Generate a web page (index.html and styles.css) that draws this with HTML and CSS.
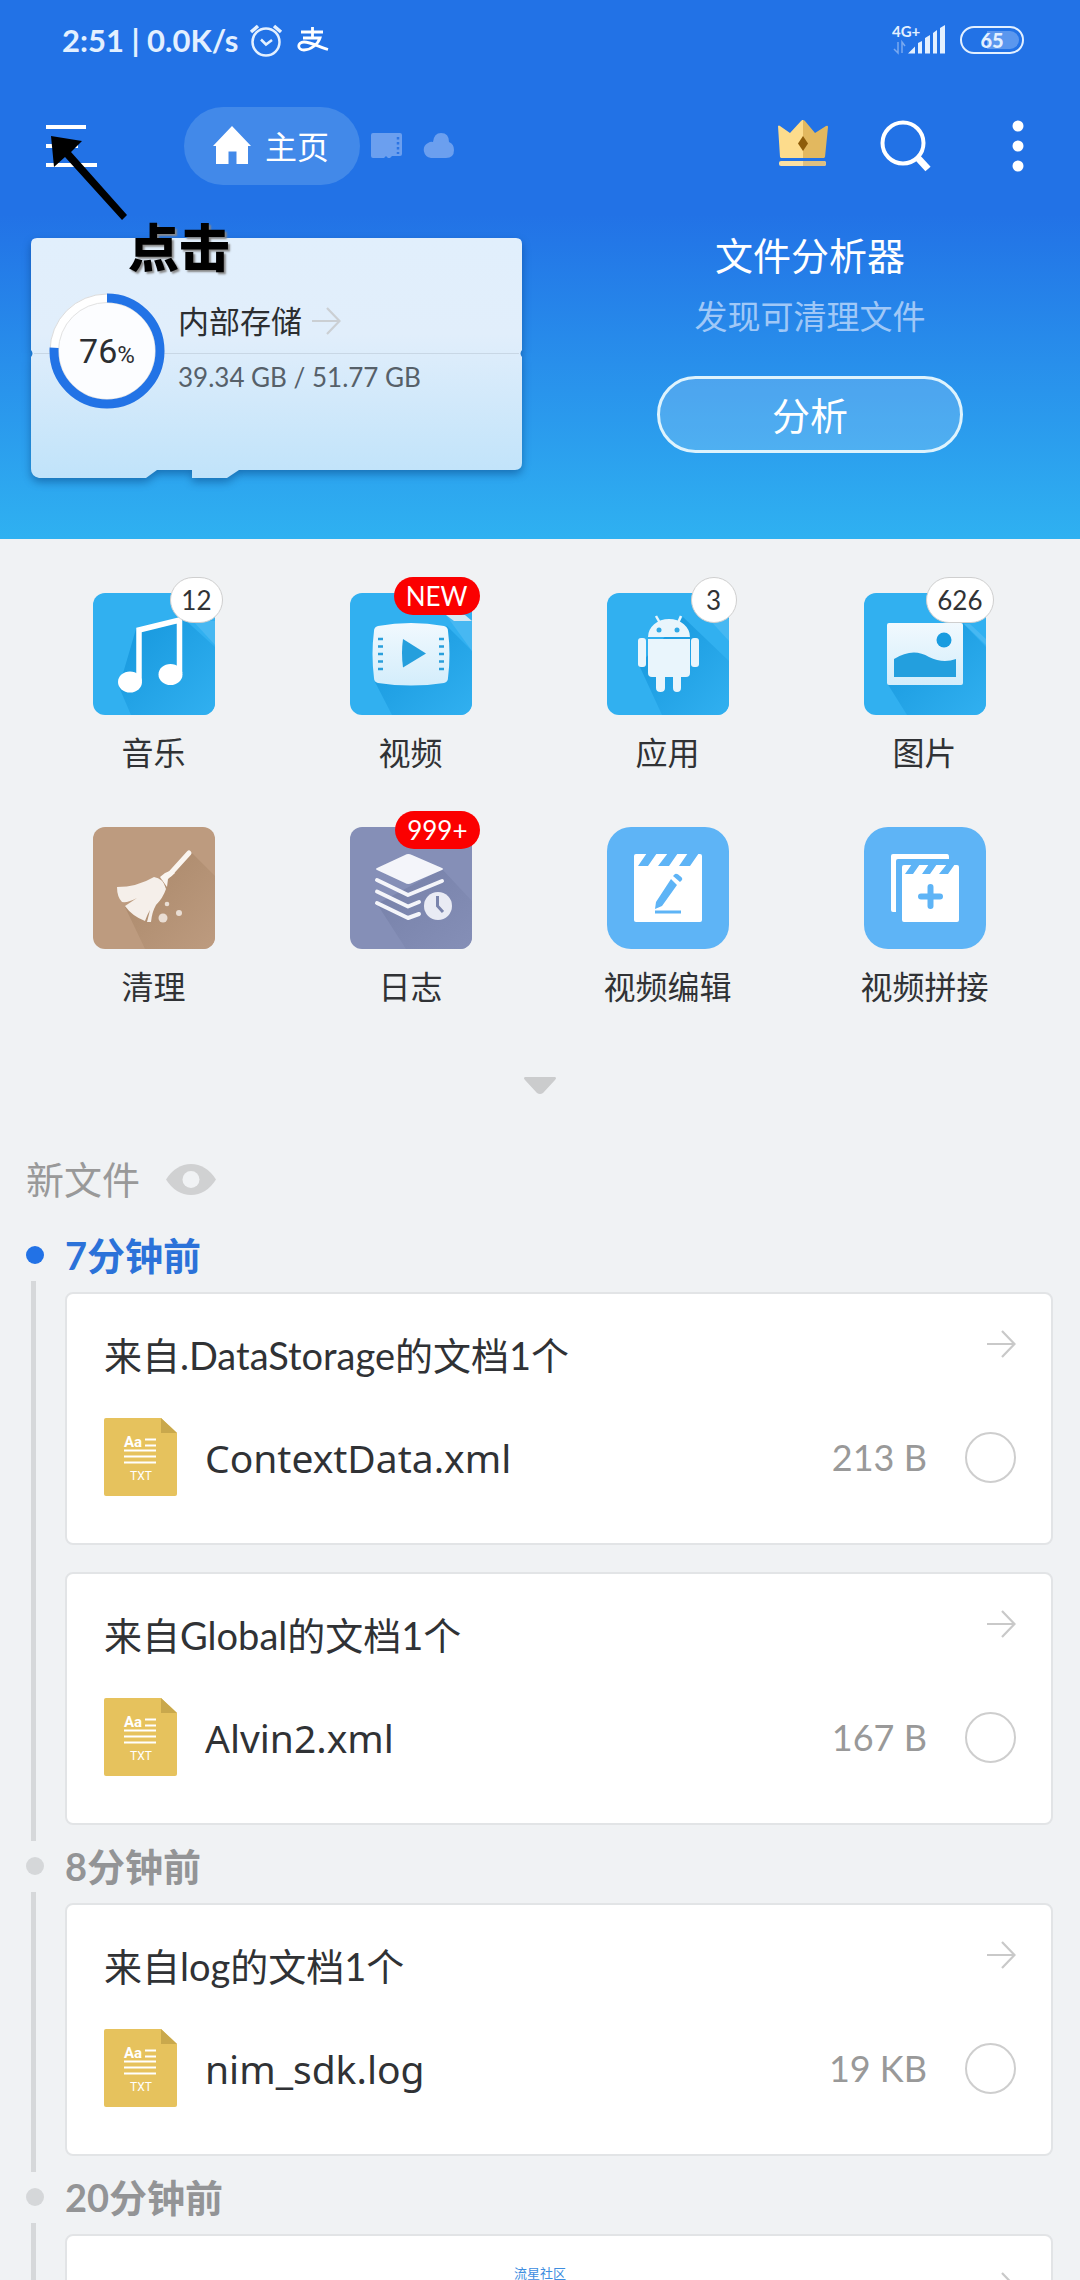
FILE: index.html
```html
<!DOCTYPE html>
<html lang="zh-CN">
<head>
<meta charset="utf-8">
<meta name="viewport" content="width=device-width, initial-scale=1">
<title>主页</title>
<link rel="stylesheet" href="styles.css">
</head>
<body>
<svg class="defs" aria-hidden="true">
  <defs>
    <linearGradient id="card-fill" x1="0" y1="0" x2="0" y2="1"><stop offset="0" stop-color="#e1effc"/><stop offset=".4" stop-color="#e1eefb"/><stop offset="1" stop-color="#c0e3fa"/></linearGradient>
    <linearGradient id="shade-blue" x1="0" y1="0" x2="1" y2="1"><stop offset="0" stop-color="#1596dc"/><stop offset="1" stop-color="#31b0f0"/></linearGradient>
    <linearGradient id="shade-brown" x1="0" y1="0" x2="1" y2="1"><stop offset="0" stop-color="#a98769"/><stop offset="1" stop-color="#bd9b7f"/></linearGradient>
    <linearGradient id="shade-violet" x1="0" y1="0" x2="1" y2="1"><stop offset="0" stop-color="#7680a8"/><stop offset="1" stop-color="#858fb7"/></linearGradient>
    <linearGradient id="ice" x1="0" y1="0" x2="0" y2="1"><stop offset="0" stop-color="#f1f9fe"/><stop offset="1" stop-color="#d3edfb"/></linearGradient>
    <symbol id="arrow" viewBox="0 0 30 28"><path d="M1 14H28M16 1L28.500 14L16 27" fill="none" stroke="currentColor" stroke-width="2.200"/></symbol>
    <symbol id="doc" viewBox="0 0 73 78">
      <path d="M2 0H57L73 15V76Q73 78 71 78H2Q0 78 0 76V2Q0 0 2 0Z" fill="#e6c25d"/><path d="M57 0L73 15H57Z" fill="#c9a84c"/>
      <path d="M41 21.500H52M41 27.500H52M20 32.500H52M20 38.500H52M20 44.500H52" stroke="#fff" stroke-width="2"/>
      <text x="20" y="29" font-size="15" font-weight="700" fill="#fff">Aa</text><text x="26" y="62" font-size="12" fill="#fff">TXT</text>
    </symbol>
  </defs>
</svg>

<div class="app">
  <header class="top">
    <div class="status">
      <span class="clock">2:51 | 0.0K/s</span>
      <svg class="alarm" viewBox="0 0 34 34" fill="none" stroke="#e3f0ff" stroke-width="2.500"><circle cx="17" cy="19" r="13.500"/><path d="M2 9L9 3M32 9L25 3" stroke-width="3.500"/><path d="M12 16.500L17 21.500L23 17"/></svg>
      <svg class="pay" viewBox="0 0 32 26" fill="none" stroke="#fff" stroke-width="2.800"><path d="M4 5H26M15.500 0V11M6 11H23C21 17 14 23 7 23C0 23 0 15 7 15C14 15 22 20 31 22.500" /></svg>
      <div class="signal">
        <svg viewBox="0 0 56 34"><text x="0" y="14" font-size="15" font-weight="700" fill="#e3f0ff">4G+</text><path d="M2 26L6 30V19M10 30V19L13 23" fill="none" stroke="#79a9f0" stroke-width="1.500"/><path fill="#e3f0ff" d="M16 30.500L23 23.500V30.500ZM26 20L30 18V30.500H26ZM33 15L38 12V30.500H33ZM41 10L45 7V30.500H41ZM48 5L53 2V30.500H48Z"/></svg>
        <span class="battery">65</span>
      </div>
    </div>

    <nav class="toolbar">
      <button class="menu" aria-label="菜单"><svg viewBox="0 0 51 44"><path d="M0 3H40M0 22H32M0 41H51" stroke="#fff" stroke-width="4"/></svg></button>
      <div class="tabs">
        <button class="tab-home"><svg viewBox="0 0 38 38"><path d="M19 0L38 20H35V38H23.500V25.500H15.500V38H3V20H0Z" fill="#fff"/></svg><span>主页</span></button>
        <button class="tab" aria-label="存储卡"><svg viewBox="0 0 32 26"><path d="M2 0H29Q31 0 31 2V21Q31 23 29 23H21L19 25H17L15 23L13 25H2Q0 25 0 23V2Q0 0 2 0Z" fill="#6b9fef"/><path d="M27 4V21" stroke="#2b74e4" stroke-width="2.500" stroke-dasharray="2.500 2.500"/></svg></button>
        <button class="tab" aria-label="网盘"><svg viewBox="0 0 32 26"><path d="M8 25A8 8 0 0 1 5 10Q8 8 10 9Q11 0 18 0Q26 0 26 9Q31 11 31 17Q31 25 23 25Z" fill="#6b9fef"/></svg></button>
      </div>
      <div class="tools">
        <button class="tool" aria-label="会员"><svg viewBox="0 0 52 52"><path d="M1 6Q2 5 3 6L13 13L24 1Q26 -1 26 0V38H4L3 37Z" fill="#fddc8c"/><path d="M26 0Q27 0 28 1L38 13L49 6Q51 5 51 7L48 37L47 38H26Z" fill="#e2b85f"/><rect x="2" y="41" width="47" height="5" rx="2" fill="#fbe0a3"/><path d="M26 41H47Q49 41 49 43.500Q49 46 47 46H26Z" fill="#dcbf82"/><path d="M26 16L31 23.500L26 31L21 23.500Z" fill="#8d5c0a"/></svg></button>
        <button class="tool" aria-label="搜索"><svg viewBox="0 0 52 52"><circle cx="23" cy="23" r="20.500" fill="none" stroke="#fff" stroke-width="4"/><path d="M37 37L48 49" stroke="#fff" stroke-width="7"/></svg></button>
        <button class="more" aria-label="更多"><svg viewBox="0 0 12 52" fill="#fff"><circle cx="6" cy="6" r="5.500"/><circle cx="6" cy="26" r="5.500"/><circle cx="6" cy="46" r="5.500"/></svg></button>
      </div>
    </nav>

    <section class="hero">
      <a class="storage" href="#storage">
        <svg class="storage-shape" viewBox="0 0 491 241" preserveAspectRatio="none"><path d="M6 0H485Q491 0 491 6V112Q488 115.500 491 119V225Q491 232 484 232H208L196 240H161V232H126L115 240H8Q0 238 0 231V119Q3 115.500 0 112V6Q0 0 6 0Z" fill="url(#card-fill)"/><path d="M3 115.500H488" stroke="#c8d7e5" stroke-width="1"/></svg>
        <span class="ring">
          <svg viewBox="0 0 116 116"><circle cx="58" cy="58" r="57" fill="#fff" stroke="#dcdcdc"/><circle cx="58" cy="58" r="48.500" fill="#fcfdff" stroke="#e2e2e2"/><circle cx="58" cy="58" r="53" fill="none" stroke="#2273e6" stroke-width="9" pathLength="100" stroke-dasharray="76 24" transform="rotate(-90 58 58)"/></svg>
          <span class="ring-text">76<small>%</small></span>
        </span>
        <span class="storage-info">
          <span class="storage-name">内部存储<svg class="go"><use href="#arrow"/></svg></span>
          <span class="storage-use">39.34 GB / 51.77 GB</span>
        </span>
      </a>
      <div class="analyzer">
        <h2>文件分析器</h2>
        <p>发现可清理文件</p>
        <button class="analyze">分析</button>
      </div>
    </section>
  </header>

  <main>
    <nav class="grid">
      <a class="item" href="#music"><span class="tile blue"><svg viewBox="0 0 122 122"><path d="M26 94L38 122H122V54L89 24L43 36Z" fill="url(#shade-blue)"/><path d="M100 28L122 52V28Z" fill="#47b8f2"/><path d="M46 88V37L86.500 27V80" fill="none" stroke="#fff" stroke-width="5.500"/><ellipse cx="37" cy="89" rx="12" ry="10.500" fill="#fff"/><ellipse cx="77.500" cy="81.500" rx="12" ry="10.500" fill="#fff"/></svg><b class="badge">12</b></span>音乐</a>
      <a class="item" href="#video"><span class="tile blue"><svg viewBox="0 0 122 122"><path d="M25 89L42 122H122V58L97 33Z" fill="url(#shade-blue)"/><path d="M96 22L122 58V28L115 22Z" fill="#47b8f2"/><path d="M96 22H115L122 28H104Z" fill="#d5e7f2"/><path d="M28 33Q61 27 94 33Q98 34 98 38Q101 61 98 85Q98 89 94 90Q61 95 28 90Q24 89 24 85Q21 61 24 38Q24 34 28 33Z" fill="url(#ice)"/><path d="M28 46H33M28 53.500H33M28 61H33M28 68.500H33M28 76H33M89 46H94M89 53.500H94M89 61H94M89 68.500H94M89 76H94" stroke="#2a9fdb" stroke-width="2.500"/><path d="M53 46L76 60.500L53 74.500Q51 60 53 46Z" fill="#259fdd"/></svg><b class="badge red">NEW</b></span>视频</a>
      <a class="item" href="#apps"><span class="tile blue"><svg viewBox="0 0 122 122"><path d="M32 72L55 122H122V68L76 24Z" fill="url(#shade-blue)"/><path d="M100 24L122 48V26Z" fill="#47b8f2"/><g fill="#e9f5fc"><path d="M41 44A21 18 0 0 1 83 44ZM41 46H83V80Q83 84 79 84H45Q41 84 41 80Z"/><rect x="31" y="45" width="8" height="29" rx="3"/><rect x="84" y="45" width="8" height="29" rx="3"/><path d="M49 82H58V95Q58 99 53.500 99Q49 99 49 95ZM66 82H74V95Q74 99 70 99Q66 99 66 95Z"/></g><path d="M49 23L53 30M74 23L71 30" stroke="#e9f5fc" stroke-width="2.500"/><circle cx="52" cy="37" r="2.500" fill="#31a9e6"/><circle cx="70" cy="37" r="2.500" fill="#31a9e6"/></svg><b class="badge">3</b></span>应用</a>
      <a class="item" href="#pictures"><span class="tile blue"><svg viewBox="0 0 122 122"><path d="M23 90L43 122H122V54L99 30Z" fill="url(#shade-blue)"/><path d="M100 31L122 52V46L106 31Z" fill="#47b8f2"/><path d="M25 30H97Q99 30 99 32V90Q99 92 97 92H25Q23 92 23 90V32Q23 30 25 30Z" fill="url(#ice)"/><circle cx="80" cy="47" r="7.500" fill="#199ce0"/><path d="M30 66Q49 54 65 64Q79 71 92 66V84H30Z" fill="#239fde"/></svg><b class="badge">626</b></span>图片</a>
      <a class="item" href="#clean"><span class="tile brown"><svg viewBox="0 0 122 122"><path d="M32 80L52 122H122V49L98 25L62 60Z" fill="url(#shade-brown)"/><path d="M96 26L77 47" stroke="#faf5f0" stroke-width="5" stroke-linecap="round"/><path d="M79 43L72 46L67 50L74 60L75 52L82 46Z" fill="#faf5f0"/><path d="M24 60Q44 60 61 50Q70 51 73 62Q70 71 63 78Q59 85 58 95L54 95L57 83Q54 88 52 94Q39 89 32 79L44 71Q35 76 29 75Q24 70 24 60Z" fill="#f5efea"/><circle cx="70" cy="91" r="4.500" fill="#e9ddd3"/><circle cx="86" cy="86" r="3" fill="#e9ddd3"/><circle cx="74" cy="77" r="2.300" fill="#e9ddd3"/></svg></span>清理</a>
      <a class="item" href="#log"><span class="tile violet"><svg viewBox="0 0 122 122"><path d="M27 77L56 122H122V74L92 42Z" fill="url(#shade-violet)"/><path d="M27 41L55 28Q58 26 62 28L92 41Q94 42 92 43L62 56Q58 58 55 56L27 43Q25 42 27 41Z" fill="#f4f5fa"/><path d="M27 53L58 68L92 54M27 64.500L58 79.500L69 75M27 76L58 91L69 87" fill="none" stroke="#f4f5fa" stroke-width="4" stroke-linecap="round" stroke-linejoin="round"/><circle cx="88" cy="79" r="14" fill="#e9ebf4"/><path d="M87.500 69V79L93 85" fill="none" stroke="#7a84ac" stroke-width="3"/></svg><b class="badge red">999+</b></span>日志</a>
      <a class="item" href="#edit"><span class="tile sky"><svg viewBox="0 0 122 122"><path d="M29 27H93Q95 27 95 29V93Q95 95 93 95H29Q27 95 27 93V29Q27 27 29 27Z" fill="#fff"/><path d="M40 26H50L41 39H31ZM61 26H71L62 39H51ZM81 26H92L83 39H72ZM64 52L70 58L55 79L48 82L49 75ZM66 49L68 47Q70 46 73 49Q76 51 75 53L73 55Z" fill="#5eb4f6"/><path d="M48 85H74" stroke="#5eb4f6" stroke-width="3"/></svg></span>视频编辑</a>
      <a class="item" href="#merge"><span class="tile sky"><svg viewBox="0 0 122 122"><path d="M29 27H83Q85 27 85 30V32H34Q32 32 32 34V85H29Q27 85 27 83V29Q27 27 29 27ZM40 38H93Q95 38 95 40V93Q95 95 93 95H40Q38 95 38 93V40Q38 38 40 38Z" fill="#fff"/><path d="M48 37H56L49 47H41ZM65 37H73L66 47H58ZM83 37H91L84 47H75Z" fill="#5eb4f6"/><path d="M66.500 60V79M57 69.500H76" stroke="#5eb4f6" stroke-width="6" stroke-linecap="round"/></svg></span>视频拼接</a>
    </nav>
    <button class="expand" aria-label="展开"><svg viewBox="0 0 34 18"><path d="M2 0H32Q34 1 32 3L20 16Q17 18 14 16L2 3Q0 1 2 0Z" fill="#cbcccd"/></svg></button>

    <section class="recent">
      <h2 class="recent-title">新文件 <svg viewBox="0 0 50 31"><path d="M0 15.500Q10 0 25 0Q40 0 50 15.500Q40 31 25 31Q10 31 0 15.500Z" fill="#d0d1d2"/><circle cx="25" cy="15.500" r="8.500" fill="#f0f2f4"/></svg></h2>

      <section class="group now">
        <h3>7分钟前</h3>
        <div class="cards">
          <article class="card">
            <a class="card-head" href="#datastorage">来自.DataStorage的文档1个<svg class="go"><use href="#arrow"/></svg></a>
            <label class="file"><svg class="doc"><use href="#doc"/></svg><span class="name">ContextData.xml</span><span class="size">213 B</span><input type="checkbox"></label>
          </article>
          <article class="card">
            <a class="card-head" href="#global">来自Global的文档1个<svg class="go"><use href="#arrow"/></svg></a>
            <label class="file"><svg class="doc"><use href="#doc"/></svg><span class="name">Alvin2.xml</span><span class="size">167 B</span><input type="checkbox"></label>
          </article>
        </div>
      </section>
      <section class="group">
        <h3>8分钟前</h3>
        <div class="cards">
          <article class="card">
            <a class="card-head" href="#loggroup">来自log的文档1个<svg class="go"><use href="#arrow"/></svg></a>
            <label class="file"><svg class="doc"><use href="#doc"/></svg><span class="name">nim_sdk.log</span><span class="size">19 KB</span><input type="checkbox"></label>
          </article>
        </div>
      </section>
      <section class="group">
        <h3>20分钟前</h3>
        <div class="cards">
          <article class="card"><a class="card-head" href="#older" aria-label="打开"><svg class="go"><use href="#arrow"/></svg></a></article>
        </div>
      </section>
    </section>
  </main>

  <div class="hint">
    <svg viewBox="0 0 76 84"><path d="M0 0L31 5L20 16L76 79L71 84L14 21L3 31Z"/></svg>
    <span>点击</span>
  </div>
  <span class="watermark">流星社区</span>
</div>
</body>
</html>
```
FILE: styles.css
```css
* { box-sizing: border-box; }
body {
  margin: 0;
  background: #f0f2f4;
  color: #303235;
  font-family: Lato, "Noto Sans CJK SC", sans-serif;
  font-size: 38px;
}
h2, h3, p { margin: 0; font-weight: 400; }
a { color: inherit; text-decoration: none; }
button { border: 0; padding: 0; background: none; color: inherit; font: inherit; }
svg { display: block; flex: none; }
.defs { position: absolute; width: 0; height: 0; }
.app { position: relative; height: 100vh; overflow: hidden; }

.top {
  height: 539px;
  background: linear-gradient(#2272e6 0, #2272e6 214px, #2fb1f1 539px);
  color: #fff;
}
.status {
  display: flex;
  align-items: center;
  height: 80px;
  padding: 0 56px 0 62px;
  color: #e3f0ff;
}
.clock { font-size: 31px; font-weight: 700; line-height: 40px; }
.alarm { width: 34px; height: 34px; margin-left: 11px; }
.pay { width: 32px; height: 26px; margin-left: 14px; }
.signal { display: flex; align-items: center; gap: 12px; margin-left: auto; }
.signal svg { width: 56px; height: 34px; }
.battery {
  width: 64px;
  height: 28px;
  border: 2px solid #e3f0ff;
  border-radius: 14px;
  background: linear-gradient(90deg, #2272e6 40%, #5b97ee 40%) content-box;
  padding: 3px;
  font-size: 20px;
  font-weight: 900;
  line-height: 18px;
  text-align: center;
}

.toolbar { display: flex; align-items: center; height: 132px; padding: 0 56px 0 46px; }
.menu svg { width: 51px; height: 44px; }
.tabs { display: flex; align-items: center; gap: 20px; margin-left: 87px; }
.tab-home {
  display: flex;
  align-items: center;
  justify-content: center;
  gap: 14px;
  width: 176px;
  height: 78px;
  margin-right: -9px;
  padding: 0 2px 2px 0;
  border-radius: 39px;
  background: #4289e9;
  font-size: 32px;
}
.tab-home svg { width: 38px; height: 38px; }
.tab svg { width: 32px; height: 26px; }
.tools { display: flex; align-items: center; gap: 51px; margin-left: auto; }
.tool svg { width: 52px; height: 52px; }
.more { margin-left: 29px; }
.more svg { width: 12px; height: 52px; }

.hero { display: grid; grid-template-columns: 1fr 1fr; padding-top: 26px; }
.storage {
  position: relative;
  display: flex;
  align-items: center;
  gap: 13px;
  height: 241px;
  margin: 0 18px 0 31px;
  padding: 0 18px 16px;
  color: #2c2e31;
}
.storage-shape {
  position: absolute;
  inset: 0;
  width: 100%;
  height: 100%;
  filter: drop-shadow(0 4px 4px rgba(0, 50, 110, .45));
}
.ring { position: relative; display: grid; place-items: center; }
.ring > * { grid-area: 1 / 1; }
.ring svg { width: 116px; height: 116px; }
.ring-text { position: relative; font-family: Roboto, sans-serif; font-size: 34px; }
.ring-text small { font-size: 24px; }
.storage-info { position: relative; display: grid; gap: 16px; padding-bottom: 4px; }
.storage-name { display: flex; align-items: center; gap: 9px; font-size: 31px; line-height: 40px; }
.storage-name .go { color: #cbcfd3; }
.storage-use { font-size: 26px; line-height: 40px; color: #566069; }
.go { width: 30px; height: 28px; color: #c9c9c9; }
.analyzer { display: flex; flex-direction: column; align-items: center; }
.analyzer h2 { font-size: 38px; line-height: 34px; }
.analyzer p { margin-top: 26px; font-size: 33px; line-height: 36px; color: #a0c8f7; }
.analyze {
  width: 306px;
  height: 77px;
  margin-top: 42px;
  padding-bottom: 2px;
  border: 3px solid #def3fd;
  border-radius: 39px;
  background: rgba(255, 255, 255, .17);
}

.grid { display: grid; grid-template-columns: repeat(4, 1fr); padding: 54px 27px 0 25px; row-gap: 30px; }
.item { display: flex; flex-direction: column; align-items: center; gap: 16px; height: 204px; font-size: 32px; line-height: 44px; }
.tile { position: relative; width: 122px; height: 122px; border-radius: 12px; }
.tile svg { width: 122px; height: 122px; border-radius: inherit; overflow: hidden; }
.blue { background: #31b0f0; }
.brown { background: #bd9b7f; }
.violet { background: #858fb7; }
.sky { background: #5eb4f6; border-radius: 24px; }
.badge {
  position: absolute;
  top: -16px;
  right: -8px;
  min-width: 46px;
  height: 46px;
  padding: 0 10px;
  border: 1px solid #cfcfcf;
  border-radius: 23px;
  background: #fff;
  font-size: 26px;
  font-weight: 400;
  line-height: 44px;
  text-align: center;
}
.red { height: 38px; padding: 0 12px; border: 0; background: #fb0000; color: #fff; line-height: 38px; }
.expand { display: block; margin: 46px auto 0; }
.expand svg { width: 34px; height: 18px; }

.recent { padding: 57px 27px 0 26px; }
.recent-title { display: flex; align-items: center; gap: 16px; font-size: 38px; line-height: 54px; color: #999; }
.recent-title svg { width: 50px; height: 31px; margin-left: 10px; }
.group { position: relative; }
.group h3 { display: flex; align-items: center; gap: 21px; height: 78px; padding-top: 3px; font-size: 38px; font-weight: 700; line-height: 54px; color: #939496; }
.group h3::before { content: ""; width: 18px; height: 18px; border-radius: 50%; background: #d5d7d9; }
.now { margin-top: 8px; }
.now h3 { color: #2b72d9; }
.now h3::before { background: #2272e6; }
.group::after { content: ""; position: absolute; left: 5px; top: 67px; bottom: -16px; width: 5px; background: #d6d8da; }
.cards { display: grid; gap: 27px; padding-left: 39px; }
.card { height: 253px; padding: 35px 35px 0 37px; border: 2px solid #e2e4e6; border-radius: 8px; background: #fff; }
.card-head { display: flex; justify-content: space-between; min-height: 52px; line-height: 52px; }
.card-head .go { margin: 1px 0 0 auto; }
.file { display: flex; align-items: center; height: 78px; margin-top: 37px; }
.doc { width: 73px; height: 78px; font-family: Roboto, sans-serif; }
.name { margin-left: 28px; font-family: "Noto Sans", sans-serif; font-size: 39px; }
.size { margin-left: auto; font-size: 36px; color: #999; }
.file input {
  appearance: none;
  width: 51px;
  height: 51px;
  margin: 0 0 0 38px;
  border: 2px solid #cecece;
  border-radius: 50%;
}

.hint { position: absolute; left: 51px; top: 136px; color: #000; }
.hint svg { width: 76px; height: 84px; }
.hint span { display: block; margin: -4px 0 0 77px; font-size: 51px; font-weight: 900; line-height: 64px; text-shadow: 2px 2px 2px #888; }
.watermark { position: absolute; left: 0; right: 0; bottom: -3px; font-size: 13px; line-height: 20px; text-align: center; color: #3d8de0; }
```
